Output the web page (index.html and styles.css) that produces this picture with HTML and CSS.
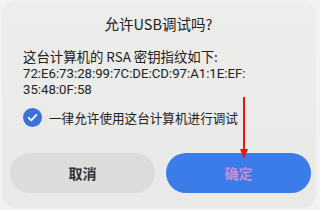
FILE: index.html
```html
<!DOCTYPE html>
<html lang="zh-CN">
<head>
<meta charset="utf-8">
<link rel="stylesheet" href="styles.css">
</head>
<body>
<div class="card">
  <div class="title">允许USB调试吗?</div>
  <div class="body">
    <div class="line">这台计算机的 RSA 密钥指纹如下:</div>
    <div class="fingerprint">
      <div class="line">72:E6:73:28:99:7C:DE:CD:97:A1:1E:EF:</div>
      <div class="line">35:48:0F:58</div>
    </div>
  </div>
  <div class="check-row">
    <span class="check">
      <svg width="19" height="19" viewBox="0 0 19 19"><circle cx="9.5" cy="9.5" r="9.5" fill="#3b72d9"/><path d="M5.6 9.8 L8.3 12.3 L13.4 6.9" fill="none" stroke="#fff" stroke-width="1.8" stroke-linecap="round" stroke-linejoin="round"/></svg>
    </span>
    <span class="check-label">一律允许使用这台计算机进行调试</span>
  </div>
  <div class="buttons">
    <div class="btn cancel">取消</div>
    <div class="btn ok">确定</div>
  </div>
  <div class="arrow">
    <div class="arrow-line"></div>
    <div class="arrow-head"></div>
  </div>
</div>
</body>
</html>
```

FILE: styles.css
```css
html, body {
  margin: 0;
  padding: 0;
}
body {
  width: 320px;
  height: 210px;
  background: #f2f2f0;
  font-family: "Noto Sans CJK SC", "Noto Sans", sans-serif;
  color: #1e1e1e;
  overflow: hidden;
}
.card {
  position: relative;
  margin: 1px 4px 0 2px;
  height: 207px;
  box-sizing: border-box;
  border-radius: 14px;
  background: linear-gradient(180deg, #ededec 0%, #e9e9e7 100%);
  padding: 13px 5px 0 8px;
}
.title {
  text-align: center;
  font-size: 14.5px;
  line-height: 20px;
  color: #222;
  padding-right: 4px;
}
.body {
  margin-top: 14px;
  padding-left: 13px;
  font-size: 13.4px;
  color: #222;
}
.line {
  height: 16.5px;
  line-height: 16.5px;
}
.fingerprint {
  margin-top: 1px;
  margin-bottom: -1px;
  font-family: Roboto, "Noto Sans", sans-serif;
  font-size: 13.2px;
}
.check-row {
  display: flex;
  align-items: center;
  gap: 7px;
  margin-top: 10px;
  padding-left: 13px;
  height: 19px;
}
.check {
  display: flex;
  width: 19px;
  height: 19px;
}
.check-label {
  font-size: 12.6px;
  color: #222;
}
.buttons {
  display: flex;
  gap: 11px;
  margin-top: 26px;
}
.btn {
  flex: 1;
  height: 40px;
  border-radius: 20px;
  display: flex;
  align-items: center;
  justify-content: center;
  font-size: 14px;
  font-weight: 700;
}
.cancel {
  background: #dcdcda;
  color: #333;
}
.ok {
  background: #3a7ce8;
  color: #c98bd6;
}
.arrow {
  position: absolute;
  left: 237px;
  top: 96px;
  width: 10px;
  display: flex;
  flex-direction: column;
  align-items: center;
}
.arrow-line {
  width: 2px;
  height: 52px;
  background: #e5161f;
}
.arrow-head {
  width: 0;
  height: 0;
  border-left: 4px solid transparent;
  border-right: 4px solid transparent;
  border-top: 10px solid #e5161f;
}
```
